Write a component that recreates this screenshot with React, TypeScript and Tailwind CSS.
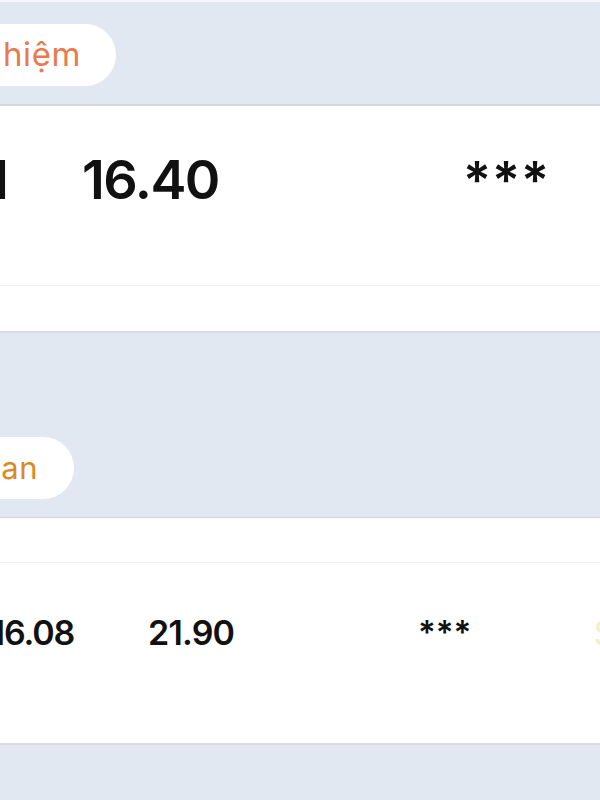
import React from "react";

const font = { fontFamily: 'Inter, "Liberation Sans", Arial, sans-serif' };

export default function App() {
  return (
    <div className="w-[600px] h-[800px] overflow-hidden bg-white" style={font}>
      {/* Section 1 header */}
      <div className="h-[104px] bg-[#e2e8f1] flex flex-col justify-end pb-[18px] border-t-2 border-[#f3f6fa]">
        <div className="h-[62px] w-[116px] bg-white rounded-r-full flex items-center justify-end pr-[35px] overflow-hidden">
          <span className="text-[33px] text-[#e77b4e] whitespace-nowrap tracking-[0.6px]">Nhiệm</span>
        </div>
      </div>
      <div className="h-[2px] bg-[#d3d7de]" />
      {/* Row 1 */}
      <div className="h-[179px] bg-white flex items-start pt-[47px]">
        <div className="w-[9px] flex justify-end overflow-hidden">
          <span className="text-[54px] font-semibold text-[#111] leading-none whitespace-nowrap">H</span>
        </div>
        <div className="w-[73px]" />
        <div className="w-[381px] flex">
          <span className="text-[54px] font-semibold text-[#111] leading-none tracking-[-1.5px]">16.40</span>
        </div>
        <span className="text-[52px] font-semibold text-[#111] leading-none tracking-[1px] mt-[2px]">***</span>
      </div>
      <div className="h-px bg-[#eceef2]" />
      <div className="h-[45px] bg-white" />
      <div className="h-[2px] bg-[#d8dce2]" />
      {/* Section 2 header */}
      <div className="h-[184px] bg-[#e2e8f1] flex flex-col justify-end pb-[18px]">
        <div className="h-[62px] w-[74px] bg-white rounded-r-full flex items-center justify-end pr-[36px] overflow-hidden">
          <span className="text-[31px] text-[#d88b23] whitespace-nowrap tracking-[0.5px]">Khoan</span>
        </div>
      </div>
      <div className="h-px bg-[#cfd3da]" />
      <div className="h-[44px] bg-white" />
      <div className="h-px bg-[#f1f2f4]" />
      {/* Row 2 */}
      <div className="h-[180px] bg-white flex items-start pt-[53px]">
        <div className="w-[74px] flex justify-end overflow-hidden">
          <span className="text-[34px] font-semibold text-[#111] leading-none whitespace-nowrap tracking-[-1.2px]">16.08</span>
        </div>
        <div className="w-[74px]" />
        <div className="w-[270px] flex">
          <span className="text-[34px] font-semibold text-[#111] leading-none tracking-[-0.8px]">21.90</span>
        </div>
        <span className="text-[33px] font-semibold text-[#111] leading-none">***</span>
        <div className="flex-1 flex justify-end overflow-hidden">
          <span className="text-[35px] text-[#f5efc8] leading-none -mr-[16px]">$</span>
        </div>
      </div>
      <div className="h-[2px] bg-[#d8dce2]" />
      <div className="h-[60px] bg-[#e2e8f1]" />
    </div>
  );
}
